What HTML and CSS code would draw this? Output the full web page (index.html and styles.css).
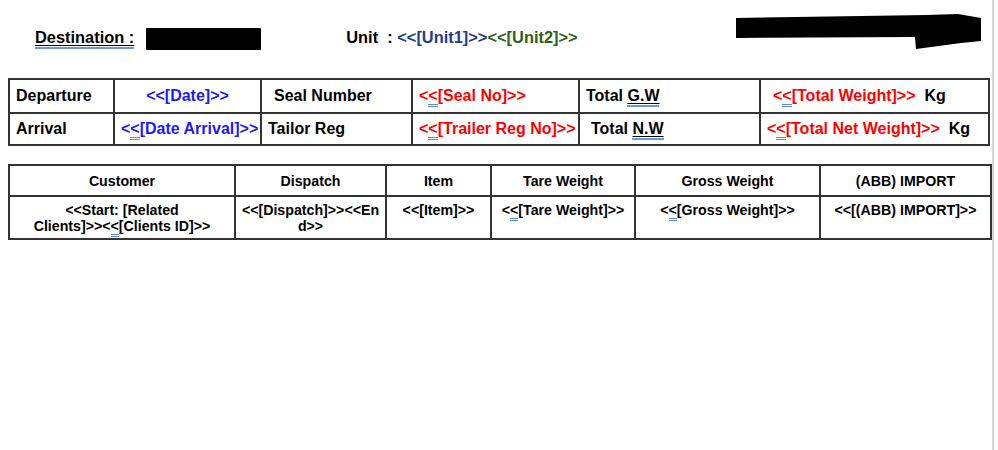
FILE: index.html
```html
<!DOCTYPE html>
<html>
<head>
<meta charset="utf-8">
<link rel="stylesheet" href="styles.css">
</head>
<body>
<div class="page">
  <div class="header">
    <span class="dest"><span class="ul">Destination :</span></span>
    <span class="redact"></span>
    <span class="unit">Unit&nbsp; : <span class="u1">&lt;&lt;[Unit1]&gt;&gt;</span><span class="u2">&lt;&lt;[Unit2]&gt;&gt;</span></span>
    <svg class="redact2" width="246" height="37" viewBox="0 0 246 37">
      <path d="M0 4 L60 3 L190 1 L222 0 L245 4 L245 27 L225 29 L180 35 L179 23 L0 24 Z" fill="#000"/>
    </svg>
  </div>
  <table class="t1">
    <colgroup>
      <col style="width:105px"><col style="width:147px"><col style="width:151px"><col style="width:167px"><col style="width:181px"><col style="width:229px">
    </colgroup>
    <tr class="r1">
      <td class="pl">Departure</td>
      <td class="c blue">&lt;&lt;[Date]&gt;&gt;</td>
      <td class="pl2">Seal Number</td>
      <td class="red pl">&lt;<span class="g">&lt;</span>[Seal No]&gt;&gt;</td>
      <td class="pl">Total <span class="ul">G.W</span></td>
      <td class="pl3"><span class="red">&lt;<span class="g">&lt;</span>[Total Weight]&gt;&gt;</span>&nbsp; Kg</td>
    </tr>
    <tr class="r2">
      <td class="pl">Arrival</td>
      <td class="blue pl">&lt;<span class="g">&lt;</span>[Date Arrival]&gt;&gt;</td>
      <td class="pl">Tailor Reg</td>
      <td class="red pl">&lt;<span class="g">&lt;</span>[Trailer Reg No]&gt;&gt;</td>
      <td class="pl2b">Total <span class="ul">N.W</span></td>
      <td class="pl"><span class="red">&lt;<span class="g">&lt;</span>[Total Net Weight]&gt;&gt;</span>&nbsp; Kg</td>
    </tr>
  </table>
  <table class="t2">
    <colgroup>
      <col style="width:226px"><col style="width:151px"><col style="width:105px"><col style="width:144px"><col style="width:185px"><col style="width:171px">
    </colgroup>
    <tr class="h">
      <td>Customer</td><td>Dispatch</td><td>Item</td><td>Tare Weight</td><td>Gross Weight</td><td>(ABB) IMPORT</td>
    </tr>
    <tr class="d">
      <td>&lt;&lt;Start: [Related<br>Clients]&gt;&gt;&lt;<span class="g">&lt;</span>[Clients ID]&gt;&gt;</td>
      <td>&lt;&lt;[Dispatch]&gt;&gt;&lt;&lt;En<br>d&gt;&gt;</td>
      <td>&lt;&lt;[Item]&gt;&gt;</td>
      <td>&lt;<span class="g">&lt;</span>[Tare Weight]&gt;&gt;</td>
      <td>&lt;<span class="g">&lt;</span>[Gross Weight]&gt;&gt;</td>
      <td>&lt;&lt;[(ABB) IMPORT]&gt;&gt;</td>
    </tr>
  </table>
</div>
</body>
</html>
```
FILE: styles.css
```css
html, body {
  margin: 0;
  padding: 0;
  background: #fff;
}
body {
  font-family: "Liberation Sans", Arial, sans-serif;
  font-weight: bold;
  color: #000;
}
.page {
  width: 994px;
  height: 450px;
  border-right: 2px solid #d4d4d4;
  box-sizing: border-box;
  padding-left: 8px;
}
.header {
  height: 78px;
  display: flex;
  align-items: flex-start;
  font-size: 16.4px;
}
.dest {
  margin-left: 27px;
  margin-top: 28px;
}
.ul {
  text-decoration: underline;
  text-decoration-thickness: 1px;
  text-underline-offset: 2px;
  border-bottom: 2px solid #6d96e2;
  padding-bottom: 1px;
}
.redact {
  display: inline-block;
  width: 115px;
  height: 22px;
  background: #000;
  margin-left: 12px;
  margin-top: 28px;
  border-radius: 1px;
}
.unit {
  margin-left: 85px;
  margin-top: 28px;
}
.u1 { color: #1f3d8c; }
.u2 { color: #2f5f1f; }
.redact2 {
  margin-left: 158px;
  margin-top: 14px;
}
table {
  border-collapse: collapse;
  table-layout: fixed;
}
td {
  border: 2px solid #333;
  padding: 0;
  white-space: nowrap;
  overflow: hidden;
}
.t1 {
  width: 980px;
  font-size: 16px;
}
.t1 .r1 td { height: 32px; }
.t1 .r2 td { height: 30px; }
.t1 td.pl { padding-left: 6px; }
.t1 td.pl2 { padding-left: 12px; }
.t1 td.pl2b { padding-left: 11px; }
.t1 td.pl3 { padding-left: 12px; }
.c { text-align: center; }
.blue { color: #1a1aff; }
.red { color: #ff0000; }
.g {
  border-bottom: 3px double #5b8ad6;
}
.t2 {
  margin-top: 18px;
  width: 982px;
  font-size: 14.2px;
}
.t2 td {
  text-align: center;
  white-space: normal;
}
.t2 .h td {
  height: 29px;
}
.t2 .d td {
  height: 43px;
  vertical-align: top;
  padding-top: 5px;
  line-height: 16px;
  box-sizing: border-box;
}
```
